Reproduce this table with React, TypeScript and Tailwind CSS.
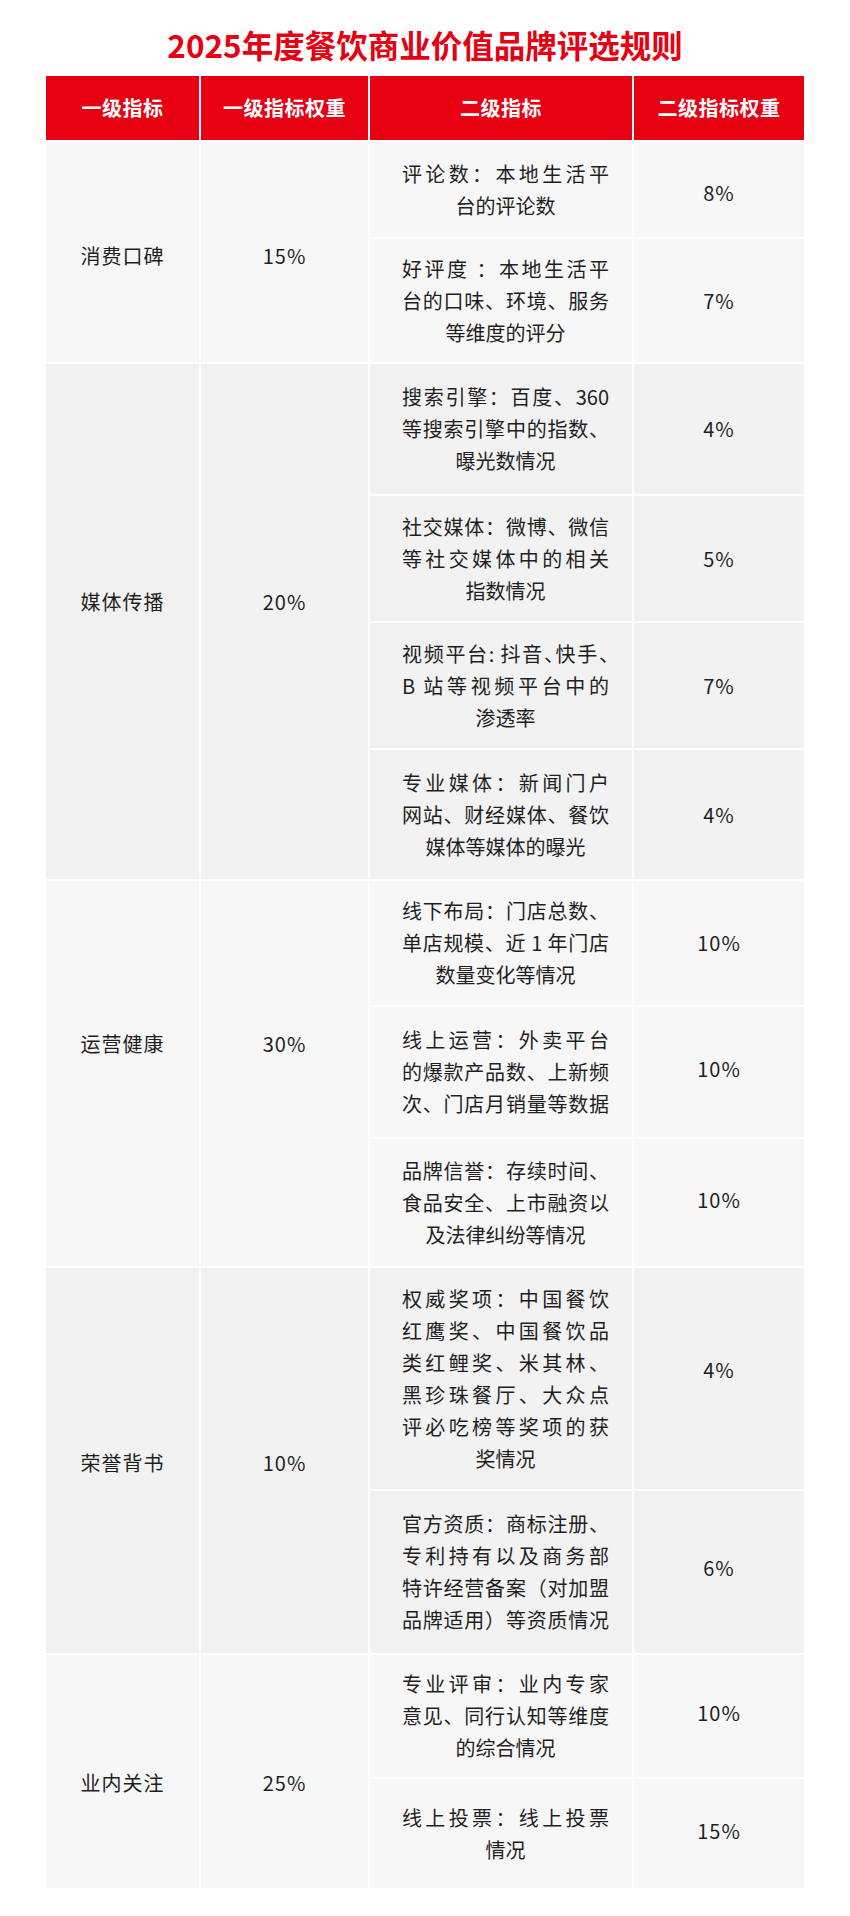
import React from "react";

type Row = {
  h: string;
  lines: string[];
  p: string;
  pAdj?: string;
  halt?: number[];
  lastFull?: boolean;
};

type Group = {
  label: string;
  w: string;
  bg: string;
  pt: string;
  rows: Row[];
};

const groups: Group[] = [
  {
    label: "消费口碑",
    w: "15%",
    bg: "bg-[#f7f7f7]",
    pt: "pt-[98px]",
    rows: [
      { h: "h-[95px]", lines: ["评论数：本地生活平", "台的评论数"], p: "8%", pAdj: "pt-[7px]" },
      {
        h: "h-[123px]",
        lines: ["好评度 ：本地生活平", "台的口味、环境、服务", "等维度的评分"],
        p: "7%",
      },
    ],
  },
  {
    label: "媒体传播",
    w: "20%",
    bg: "bg-[#f2f2f2]",
    pt: "pt-[222px]",
    rows: [
      {
        h: "h-[130px]",
        lines: ["搜索引擎：百度、360", "等搜索引擎中的指数、", "曝光数情况"],
        p: "4%",
      },
      {
        h: "h-[125px]",
        lines: ["社交媒体：微博、微信", "等社交媒体中的相关", "指数情况"],
        p: "5%",
      },
      {
        h: "h-[125px]",
        lines: ["视频平台: 抖音、快手、", "B 站等视频平台中的", "渗透率"],
        p: "7%",
        halt: [0],
      },
      {
        h: "h-[129px]",
        lines: ["专业媒体：新闻门户", "网站、财经媒体、餐饮", "媒体等媒体的曝光"],
        p: "4%",
      },
    ],
  },
  {
    label: "运营健康",
    w: "30%",
    bg: "bg-[#f7f7f7]",
    pt: "pt-[147px]",
    rows: [
      {
        h: "h-[124px]",
        lines: ["线下布局：门店总数、", "单店规模、近 1 年门店", "数量变化等情况"],
        p: "10%",
      },
      {
        h: "h-[130px]",
        lines: ["线上运营：外卖平台", "的爆款产品数、上新频", "次、门店月销量等数据"],
        p: "10%",
        lastFull: true,
        pAdj: "pb-[6px]",
      },
      {
        h: "h-[127px]",
        lines: ["品牌信誉：存续时间、", "食品安全、上市融资以", "及法律纠纷等情况"],
        p: "10%",
        pAdj: "pb-[6px]",
      },
    ],
  },
  {
    label: "荣誉背书",
    w: "10%",
    bg: "bg-[#f2f2f2]",
    pt: "pt-[179px]",
    rows: [
      {
        h: "h-[221px]",
        lines: [
          "权威奖项：中国餐饮",
          "红鹰奖、中国餐饮品",
          "类红鲤奖、米其林、",
          "黑珍珠餐厅、大众点",
          "评必吃榜等奖项的获",
          "奖情况",
        ],
        p: "4%",
        pAdj: "pb-[18px]",
      },
      {
        h: "h-[162px]",
        lines: ["官方资质：商标注册、", "专利持有以及商务部", "特许经营备案（对加盟", "品牌适用）等资质情况"],
        p: "6%",
        lastFull: true,
        pAdj: "pb-[8px]",
      },
    ],
  },
  {
    label: "业内关注",
    w: "25%",
    bg: "bg-[#f7f7f7]",
    pt: "pt-[112px]",
    rows: [
      {
        h: "h-[122px]",
        lines: ["专业评审：业内专家", "意见、同行认知等维度", "的综合情况"],
        p: "10%",
        pAdj: "pb-[6px]",
      },
      { h: "h-[109px]", lines: ["线上投票：线上投票", "情况"], p: "15%", pAdj: "pb-[6px]" },
    ],
  },
];

function Lines({ row }: { row: Row }) {
  return (
    <div className="ml-[32px] w-[207px]">
      {row.lines.map((l, i) => {
        const last = i === row.lines.length - 1;
        const justify = !last || row.lastFull;
        const halt = row.halt?.includes(i);
        return (
          <div
            key={i}
            className={
              "whitespace-nowrap leading-[32px] " +
              (justify ? "text-justify [text-align-last:justify] " : "text-center ") +
              (halt ? "[font-feature-settings:'halt']" : "")
            }
          >
            {l}
          </div>
        );
      })}
    </div>
  );
}

export default function App() {
  return (
    <div className="min-h-[1916px] w-[850px] bg-white font-['Noto_Sans_CJK_SC','Noto_Sans_CJK_JP',sans-serif] text-[#1f1f1f]">
      <div className="pt-[24px] text-center text-[31.5px] font-bold leading-[40px] text-[#e60012]">
        2025年度餐饮商业价值品牌评选规则
      </div>
      <div className="mx-auto mt-[12px] flex w-[758px] flex-col gap-[2px] pb-[28px]">
        <div className="flex h-[64px] gap-[2px] text-[20px] font-bold tracking-[0.5px] text-white">
          <div className="flex w-[153px] items-center justify-center bg-[#e60012]">一级指标</div>
          <div className="flex w-[167px] items-center justify-center bg-[#e60012]">一级指标权重</div>
          <div className="flex w-[262px] items-center justify-center bg-[#e60012]">二级指标</div>
          <div className="flex w-[170px] items-center justify-center bg-[#e60012]">二级指标权重</div>
        </div>
        {groups.map((g) => (
          <div key={g.label} className="flex gap-[2px] text-[20px]">
            <div className={`w-[153px] ${g.bg} ${g.pt} text-center leading-[32px] tracking-[1px]`}>
              {g.label}
            </div>
            <div className={`w-[167px] ${g.bg} ${g.pt} text-center leading-[32px] tracking-[1px]`}>
              {g.w}
            </div>
            <div className="flex flex-col gap-[2px]">
              {g.rows.map((r, i) => (
                <div key={i} className={`flex gap-[2px] ${r.h}`}>
                  <div className={`flex w-[262px] items-center ${g.bg}`}>
                    <Lines row={r} />
                  </div>
                  <div
                    className={`flex w-[170px] items-center justify-center ${g.bg} ${r.pAdj ?? ""} leading-[32px] tracking-[1px]`}
                  >
                    {r.p}
                  </div>
                </div>
              ))}
            </div>
          </div>
        ))}
      </div>
    </div>
  );
}
